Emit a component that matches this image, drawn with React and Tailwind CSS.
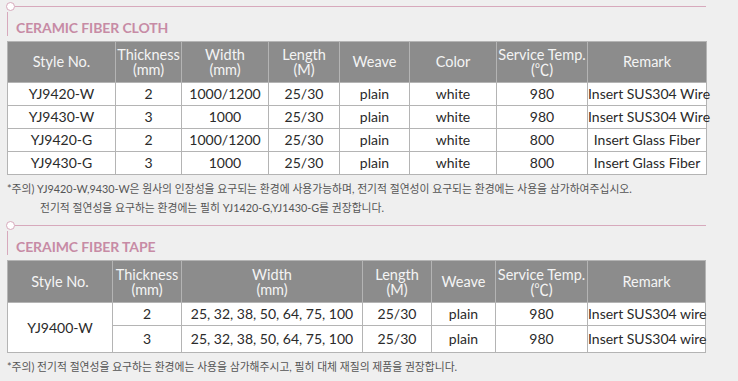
import React from "react";

const cloth = [
  ["YJ9420-W", "2", "1000/1200", "25/30", "plain", "white", "980", "Insert SUS304 Wire"],
  ["YJ9430-W", "3", "1000", "25/30", "plain", "white", "980", "Insert SUS304 Wire"],
  ["YJ9420-G", "2", "1000/1200", "25/30", "plain", "white", "800", "Insert Glass Fiber"],
  ["YJ9430-G", "3", "1000", "25/30", "plain", "white", "800", "Insert Glass Fiber"],
];

const tape = [
  ["2", "25, 32, 38, 50, 64, 75, 100", "25/30", "plain", "980", "Insert SUS304 wire"],
  ["3", "25, 32, 38, 50, 64, 75, 100", "25/30", "plain", "980", "Insert SUS304 wire"],
];

const th = "border border-[#b4b4b4] bg-[#8c8c8c] text-[#f4f4f4] font-normal text-[14.5px] p-0 align-middle whitespace-nowrap";
const td = "border border-[#b4b4b4] bg-white text-[#2a2a2a] text-[14px] p-0 text-center align-middle";

const Head = ({ top, sub }) => (
  <div className="flex flex-col items-center leading-[15px]">
    <span>{top}</span>
    <span>{sub}</span>
  </div>
);

const SectionTitle = ({ children }) => (
  <div>
    <div className="flex items-center h-[12px]">
      <span className="w-[9px] h-[9px] ml-[6px] rounded-full border border-[#d7a9bc] bg-white" />
      <div className="w-[691px] h-px bg-[#d7a9bc]" />
    </div>
    <div className="ml-[7px] h-[29px] flex items-start">
      <div className="w-px h-[24px] bg-[#d7a9bc]" />
      <h2 className="ml-[8px] mt-[7px] text-[14px] leading-[18px] font-bold tracking-[-0.1px] text-[#c78ba5]">
        {children}
      </h2>
    </div>
  </div>
);

export default function App() {
  return (
    <div className="w-[738px] h-[381px] overflow-hidden bg-[#efefef] font-['Lato','Noto_Sans_CJK_KR',sans-serif]">
      <SectionTitle>CERAMIC FIBER CLOTH</SectionTitle>
      <table className="ml-[7px] w-[699px] table-fixed border-collapse">
        <colgroup>
          <col className="w-[108px]" />
          <col className="w-[66px]" />
          <col className="w-[87px]" />
          <col className="w-[71px]" />
          <col className="w-[70px]" />
          <col className="w-[87px]" />
          <col className="w-[91px]" />
          <col className="w-[119px]" />
        </colgroup>
        <thead>
          <tr className="h-[41px]">
            <th className={th}>Style No.</th>
            <th className={th}><Head top="Thickness" sub="(mm)" /></th>
            <th className={th}><Head top="Width" sub="(mm)" /></th>
            <th className={th}><Head top="Length" sub="(M)" /></th>
            <th className={th}>Weave</th>
            <th className={th}>Color</th>
            <th className={th}><Head top="Service Temp." sub="(℃)" /></th>
            <th className={th}>Remark</th>
          </tr>
        </thead>
        <tbody>
          {cloth.map((row) => (
            <tr key={row[0]} className="h-[23px]">
              {row.map((c, i) => (
                <td key={i} className={td + " leading-[20px] whitespace-nowrap"}>{c}</td>
              ))}
            </tr>
          ))}
        </tbody>
      </table>

      <div className="mt-[4px] h-[40px] text-[10.8px] leading-[19px] text-[#555]">
        <p className="ml-[7px]">
          *주의) YJ9420-W,9430-W은 원사의 인장성을 요구되는 환경에 사용가능하며, 전기적 절연성이 요구되는 환경에는 사용을 삼가하여주십시오.
        </p>
        <p className="ml-[40px]">전기적 절연성을 요구하는 환경에는 필히 YJ1420-G,YJ1430-G를 권장합니다.</p>
      </div>

      <SectionTitle>CERAIMC FIBER TAPE</SectionTitle>
      <table className="ml-[7px] w-[698px] table-fixed border-collapse">
        <colgroup>
          <col className="w-[105px]" />
          <col className="w-[69px]" />
          <col className="w-[181px]" />
          <col className="w-[69px]" />
          <col className="w-[64px]" />
          <col className="w-[92px]" />
          <col className="w-[118px]" />
        </colgroup>
        <thead>
          <tr className="h-[42px]">
            <th className={th}>Style No.</th>
            <th className={th}><Head top="Thickness" sub="(mm)" /></th>
            <th className={th}><Head top="Width" sub="(mm)" /></th>
            <th className={th}><Head top="Length" sub="(M)" /></th>
            <th className={th}>Weave</th>
            <th className={th}><Head top="Service Temp." sub="(℃)" /></th>
            <th className={th}>Remark</th>
          </tr>
        </thead>
        <tbody>
          {tape.map((row, r) => (
            <tr key={r} className={r === 0 ? "h-[23px]" : "h-[27px]"}>
              {r === 0 && (
                <td rowSpan={2} className={td}>YJ9400-W</td>
              )}
              {row.map((c, i) => (
                <td key={i} className={td + " leading-[20px] whitespace-nowrap"}>{c}</td>
              ))}
            </tr>
          ))}
        </tbody>
      </table>

      <p className="ml-[7px] mt-[4px] text-[10.8px] leading-[19px] text-[#555]">
        *주의) 전기적 절연성을 요구하는 환경에는 사용을 삼가해주시고, 필히 대체 재질의 제품을 권장합니다.
      </p>
    </div>
  );
}
